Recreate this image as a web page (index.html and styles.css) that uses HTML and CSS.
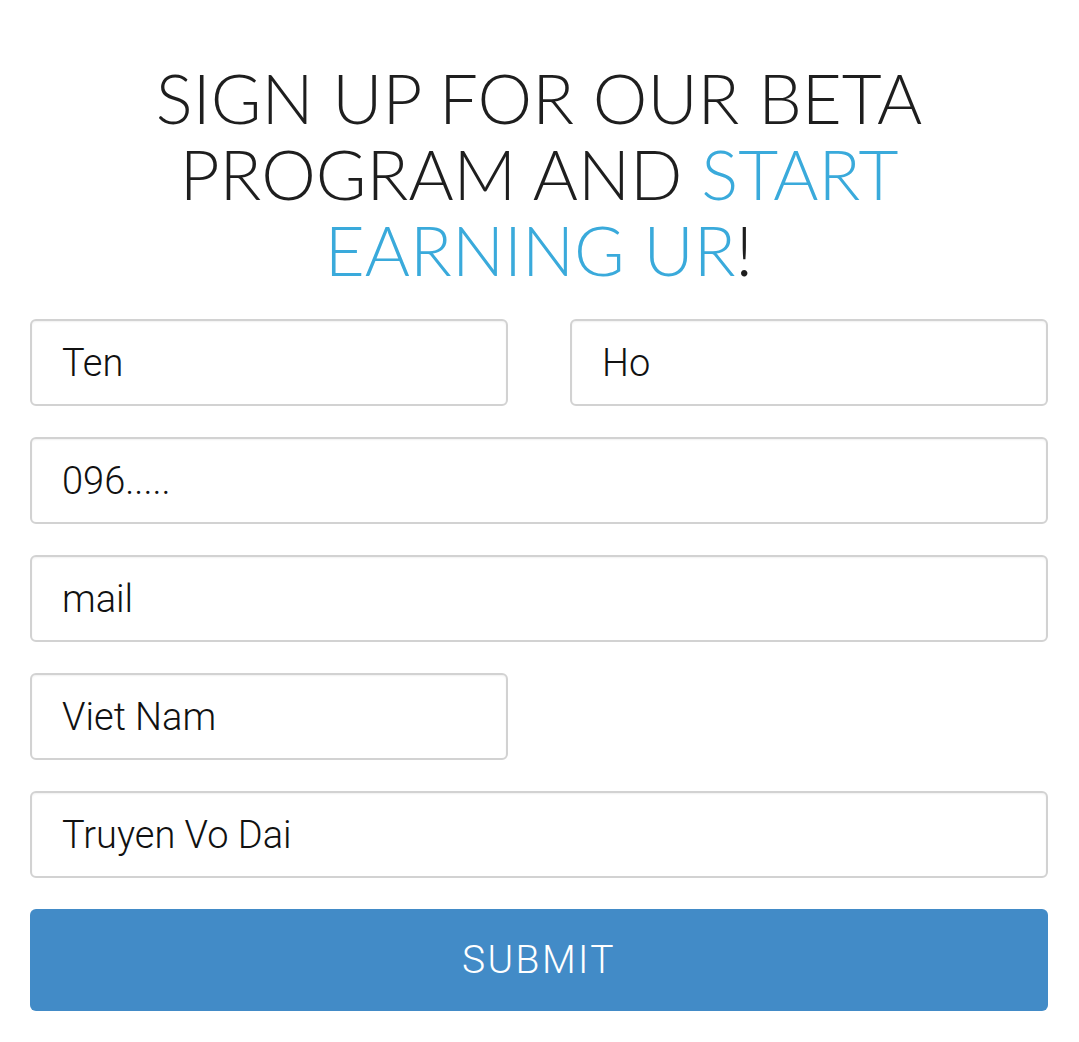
FILE: index.html
```html
<!DOCTYPE html>
<html>
<head>
<meta charset="utf-8">
<link rel="stylesheet" href="styles.css">
</head>
<body>
<div class="page">
  <h1 class="title">SIGN UP FOR OUR BETA PROGRAM AND <span class="accent">START EARNING UR</span>!</h1>
  <form class="form">
    <div class="row two">
      <input class="field" type="text" value="Ten">
      <input class="field" type="text" value="Ho">
    </div>
    <div class="row">
      <input class="field" type="text" value="096.....">
    </div>
    <div class="row">
      <input class="field" type="text" value="mail">
    </div>
    <div class="row two">
      <input class="field" type="text" value="Viet Nam">
    </div>
    <div class="row">
      <input class="field" type="text" value="Truyen Vo Dai">
    </div>
    <button class="submit" type="button">SUBMIT</button>
  </form>
</div>
</body>
</html>
```

FILE: styles.css
```css
html, body {
  margin: 0;
  padding: 0;
  background: #fff;
}
.page {
  padding: 60px 31px 0 30px;
}
.title {
  margin: 0 0 31px;
  text-align: center;
  font-family: Lato, "Open Sans", sans-serif;
  font-weight: 300;
  font-size: 69px;
  line-height: 76px;
  color: #1e1e1e;
  padding: 0 108px;
}
.accent {
  color: #3aaadb;
}
.form {
  display: flex;
  flex-direction: column;
  gap: 31px;
}
.row {
  display: grid;
  grid-template-columns: 1fr;
}
.row.two {
  grid-template-columns: 1fr 1fr;
  column-gap: 62px;
}
.field {
  box-sizing: border-box;
  height: 87px;
  width: 100%;
  border: 2px solid #d2d2d2;
  border-radius: 6px;
  padding: 0 30px;
  font-family: Roboto, sans-serif;
  font-weight: 300;
  font-size: 38px;
  color: #111;
  background: #fff;
  box-shadow: inset 0 1px 2px rgba(0,0,0,0.06);
  outline: none;
}
.submit {
  height: 102px;
  width: 100%;
  border: none;
  border-radius: 6px;
  background: #428bc7;
  color: #fff;
  font-family: Roboto, sans-serif;
  font-weight: 300;
  font-size: 39px;
  letter-spacing: 2.4px;
  padding: 0;
}
```
